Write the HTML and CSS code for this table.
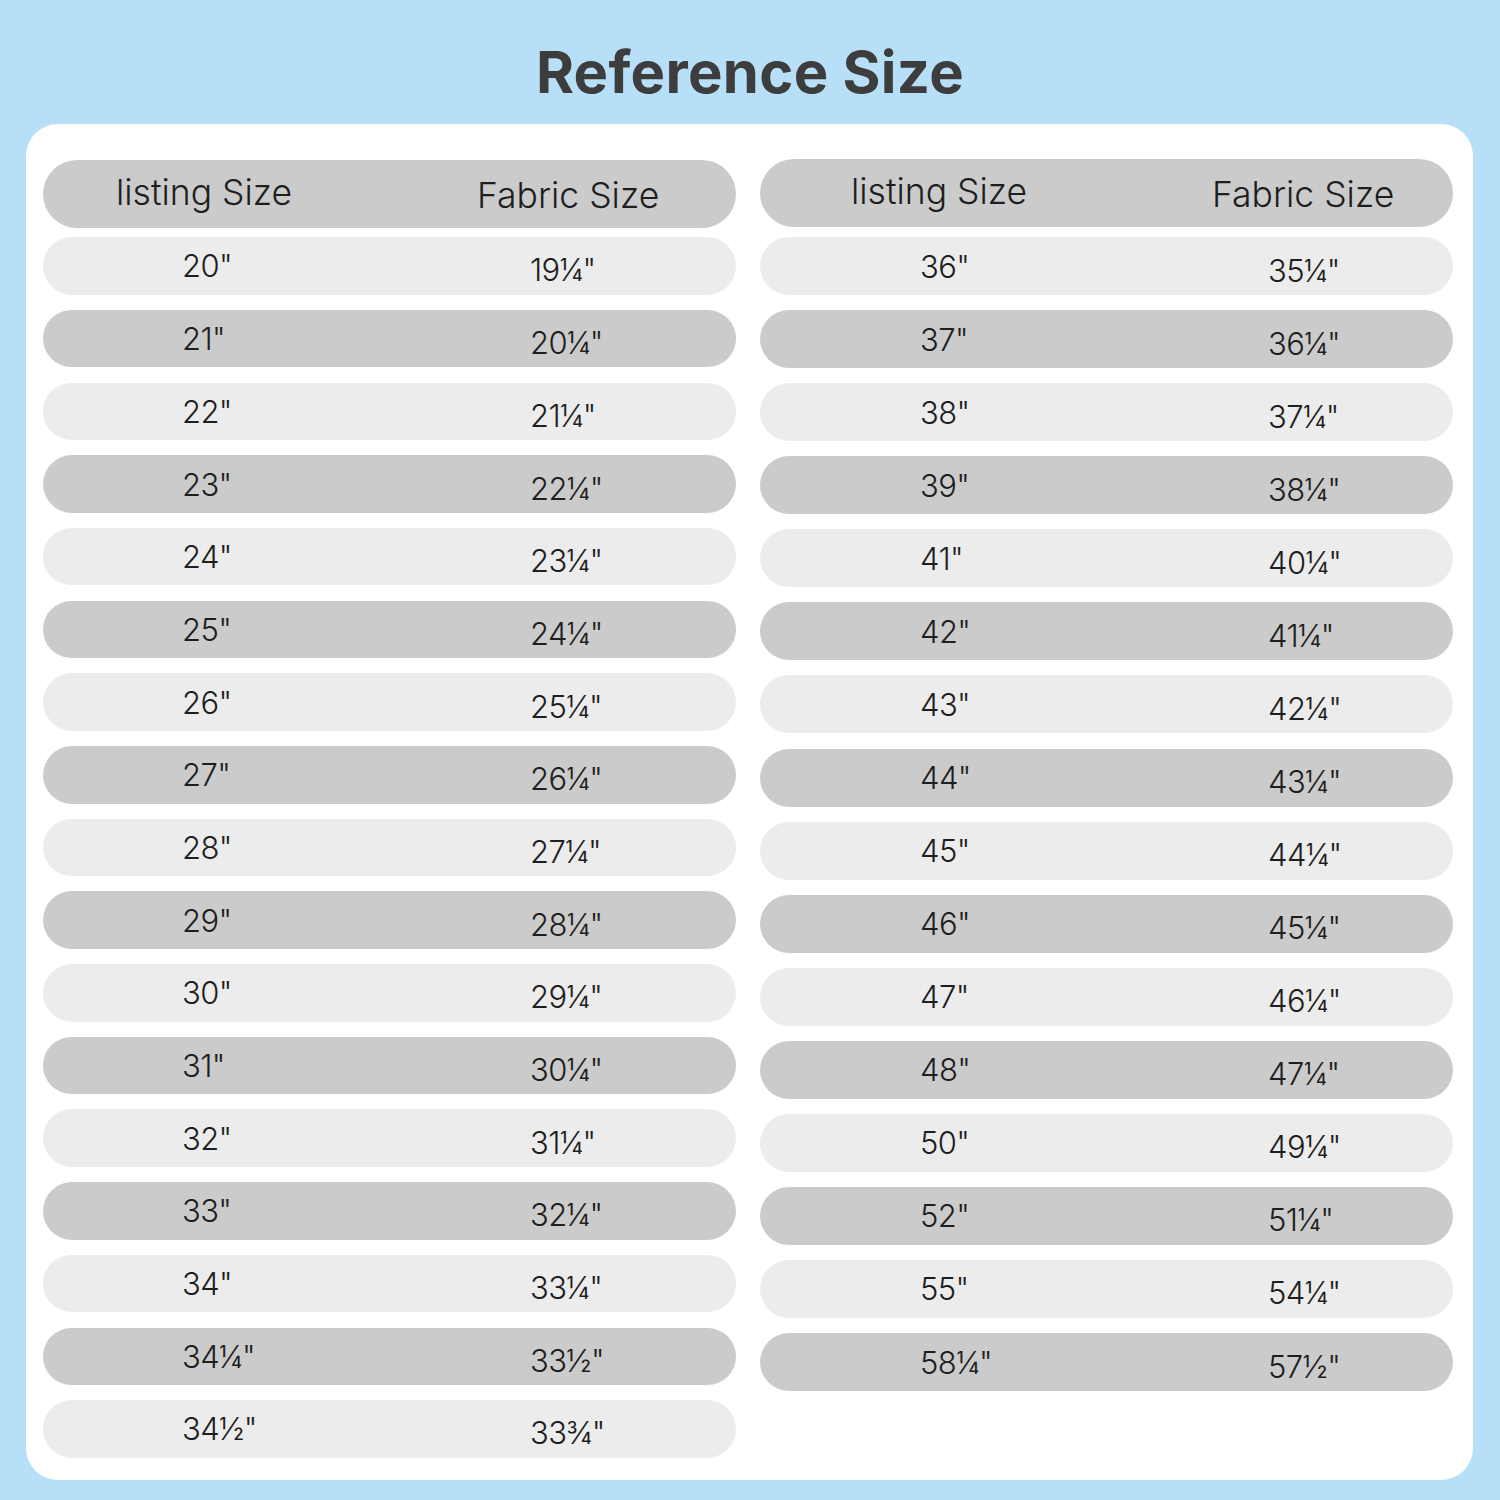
FILE: index.html
```html
<!DOCTYPE html>
<html>
<head>
<meta charset="utf-8">
<link rel="stylesheet" href="styles.css">
</head>
<body>
<h1 class="title">Reference Size</h1>
<div class="card">
  <div class="col col-left">
    <div class="row head"><span>listing Size</span><span class="fab">Fabric Size</span></div>
    <div class="row light"><span>20"</span><span class="fab">19¼"</span></div>
    <div class="row dark"><span>21"</span><span class="fab">20¼"</span></div>
    <div class="row light"><span>22"</span><span class="fab">21¼"</span></div>
    <div class="row dark"><span>23"</span><span class="fab">22¼"</span></div>
    <div class="row light"><span>24"</span><span class="fab">23¼"</span></div>
    <div class="row dark"><span>25"</span><span class="fab">24¼"</span></div>
    <div class="row light"><span>26"</span><span class="fab">25¼"</span></div>
    <div class="row dark"><span>27"</span><span class="fab">26¼"</span></div>
    <div class="row light"><span>28"</span><span class="fab">27¼"</span></div>
    <div class="row dark"><span>29"</span><span class="fab">28¼"</span></div>
    <div class="row light"><span>30"</span><span class="fab">29¼"</span></div>
    <div class="row dark"><span>31"</span><span class="fab">30¼"</span></div>
    <div class="row light"><span>32"</span><span class="fab">31¼"</span></div>
    <div class="row dark"><span>33"</span><span class="fab">32¼"</span></div>
    <div class="row light"><span>34"</span><span class="fab">33¼"</span></div>
    <div class="row dark"><span>34¼"</span><span class="fab">33½"</span></div>
    <div class="row light"><span>34½"</span><span class="fab">33¾"</span></div>
  </div>
  <div class="col col-right">
    <div class="row head"><span>listing Size</span><span class="fab">Fabric Size</span></div>
    <div class="row light"><span>36"</span><span class="fab">35¼"</span></div>
    <div class="row dark"><span>37"</span><span class="fab">36¼"</span></div>
    <div class="row light"><span>38"</span><span class="fab">37¼"</span></div>
    <div class="row dark"><span>39"</span><span class="fab">38¼"</span></div>
    <div class="row light"><span>41"</span><span class="fab">40¼"</span></div>
    <div class="row dark"><span>42"</span><span class="fab">41¼"</span></div>
    <div class="row light"><span>43"</span><span class="fab">42¼"</span></div>
    <div class="row dark"><span>44"</span><span class="fab">43¼"</span></div>
    <div class="row light"><span>45"</span><span class="fab">44¼"</span></div>
    <div class="row dark"><span>46"</span><span class="fab">45¼"</span></div>
    <div class="row light"><span>47"</span><span class="fab">46¼"</span></div>
    <div class="row dark"><span>48"</span><span class="fab">47¼"</span></div>
    <div class="row light"><span>50"</span><span class="fab">49¼"</span></div>
    <div class="row dark"><span>52"</span><span class="fab">51¼"</span></div>
    <div class="row light"><span>55"</span><span class="fab">54¼"</span></div>
    <div class="row dark"><span>58¼"</span><span class="fab">57½"</span></div>
  </div>
</div>
</body>
</html>
```

FILE: styles.css
```css
html, body {
  margin: 0;
  padding: 0;
}
body {
  width: 1500px;
  height: 1500px;
  background: #b8dff8;
  font-family: Inter, "Liberation Sans", sans-serif;
  color: #1e1e1e;
  overflow: hidden;
}
.title {
  margin: 0;
  height: 124px;
  display: flex;
  align-items: center;
  justify-content: center;
  padding-top: 20px;
  box-sizing: border-box;
  font-size: 58px;
  font-weight: 700;
  color: #3d3d3d;
  letter-spacing: 0.3px;
}
.card {
  margin-left: 26px;
  width: 1447px;
  height: 1356px;
  box-sizing: border-box;
  background: #ffffff;
  border-radius: 32px;
  padding: 36px 20px 0 17px;
  display: grid;
  grid-template-columns: 693px 693px;
  column-gap: 24px;
  align-items: start;
}
.col {
  display: flex;
  flex-direction: column;
}
.col-left { gap: 15.2px; }
.col-right { gap: 15.07px; }
.row {
  display: grid;
  align-items: center;
  border-radius: 29px;
  font-size: 31px;
  font-weight: 300;
  letter-spacing: -0.6px;
  height: 57.5px;
}
.col-right .row { height: 58px; }
.row .fab { position: relative; top: 4px; }
.row.head {
  height: 68px;
  border-radius: 34px;
  background: #cbcbcb;
  font-size: 35.5px;
  letter-spacing: 0;
  margin-bottom: -6px;
}
.col-right .row.head { margin-top: -1px; margin-bottom: -5px; height: 68px; }
.row.head span { position: relative; top: -2px; }
.row.head .fab { top: 1px; }
.dark { background: #cbcbcb; }
.light { background: #ececec; }
.col-left .row { padding-left: 139px; grid-template-columns: 348px auto; }
.col-left .row.head { padding-left: 73px; grid-template-columns: 361px auto; }
.col-right .row { padding-left: 160px; grid-template-columns: 348px auto; }
.col-right .row.head { padding-left: 91px; grid-template-columns: 361px auto; }
```
